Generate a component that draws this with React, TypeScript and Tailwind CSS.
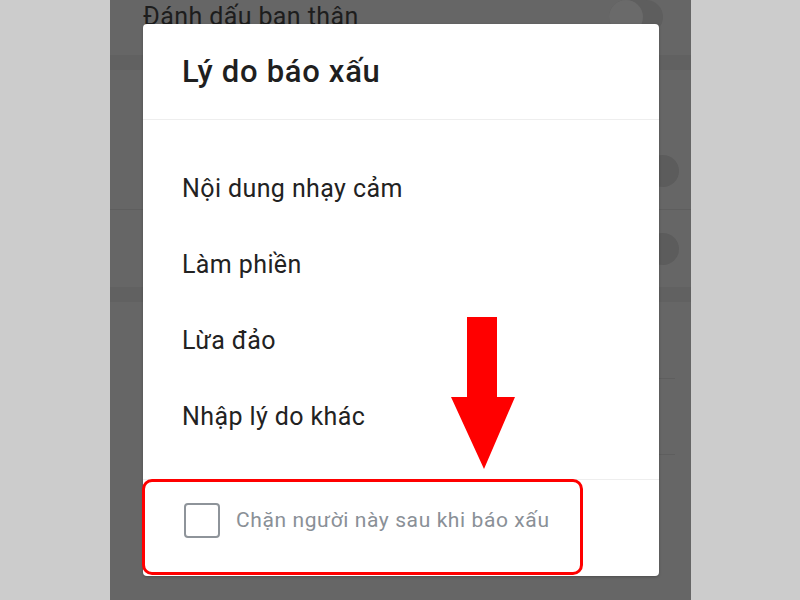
import React from 'react'

const reasons = ['Nội dung nhạy cảm', 'Làm phiền', 'Lừa đảo', 'Nhập lý do khác']

const App = () => {
  return (
    <div className='flex h-[600px] w-[800px] overflow-hidden bg-[#cccccc] font-["Roboto",sans-serif]'>
      <div className='relative ml-[110px] h-full w-[581px] bg-[#666666]'>
        {/* page behind the overlay */}
        <div className='flex h-[55px] items-start justify-between pl-[33px] pr-[28px] pt-[2px]'>
          <span className='text-[25px] leading-[30px] tracking-[0.4px] text-[#1d1d1d]'>Đánh dấu bạn thân</span>
          <div className='mt-[-2px] flex h-[34px] w-[54px] items-center rounded-full bg-[#5e5e5e]'>
            <div className='h-[34px] w-[34px] rounded-full bg-[#6a6a6a]'></div>
          </div>
        </div>
        <div className='h-[15px] bg-[#616161]'></div>
        <div className='flex h-[140px] items-end justify-end border-b border-[#5e5e5e] pb-[22px] pr-[12px]'>
          <div className='h-[32px] w-[32px] rounded-full bg-[#5c5c5c]'></div>
        </div>
        <div className='flex h-[77px] items-center justify-end pr-[12px]'>
          <div className='h-[32px] w-[32px] rounded-full bg-[#5c5c5c]'></div>
        </div>
        <div className='h-[15px] bg-[#616161]'></div>
        <div className='ml-[47px] mr-[16px] h-[77px] border-b border-[#5e5e5e]'></div>
        <div className='ml-[47px] mr-[16px] h-[76px] border-b border-[#5e5e5e]'></div>

        {/* dialog */}
        <div className='absolute left-[33px] top-[24px] flex h-[552px] w-[516px] flex-col rounded-[4px] bg-white shadow-[0_1px_3px_rgba(0,0,0,0.25)]'>
          <div className='flex h-[96px] items-center border-b border-[#eeeeee] pl-[39px] pt-[2px]'>
            <h1 className='text-[31px] font-medium tracking-[0.7px] text-[#1f1f1f]'>Lý do báo xấu</h1>
          </div>
          <div className='flex flex-col pb-[24px] pt-[31px]'>
            {reasons.map((r) => (
              <div key={r} className='flex h-[76px] items-center pl-[39px] text-[25px] tracking-[0.4px] text-[#222222]'>
                {r}
              </div>
            ))}
          </div>
          <div className='relative flex flex-1 items-start border-t border-[#eeeeee] pl-[41px] pt-[23px]'>
            <div className='h-[35px] w-[36px] rounded-[4px] border-2 border-[#8e949a]'></div>
            <span className='ml-[16px] mt-[2px] text-[21px] leading-[30px] tracking-[0.6px] text-[#8a9097]'>
              Chặn người này sau khi báo xấu
            </span>
            <div className='absolute left-[-1px] top-[-1px] h-[96px] w-[441px] rounded-[10px] border-[3px] border-[#ff0000]'></div>
          </div>
        </div>

        {/* arrow annotation */}
        <svg className='absolute left-[341px] top-[317px]' width='64' height='152' viewBox='0 0 64 152'>
          <polygon points='16,0 46,0 46,80 64,80 33,152 0,80 16,80' fill='#ff0000' />
        </svg>
      </div>
    </div>
  )
}

export default App
